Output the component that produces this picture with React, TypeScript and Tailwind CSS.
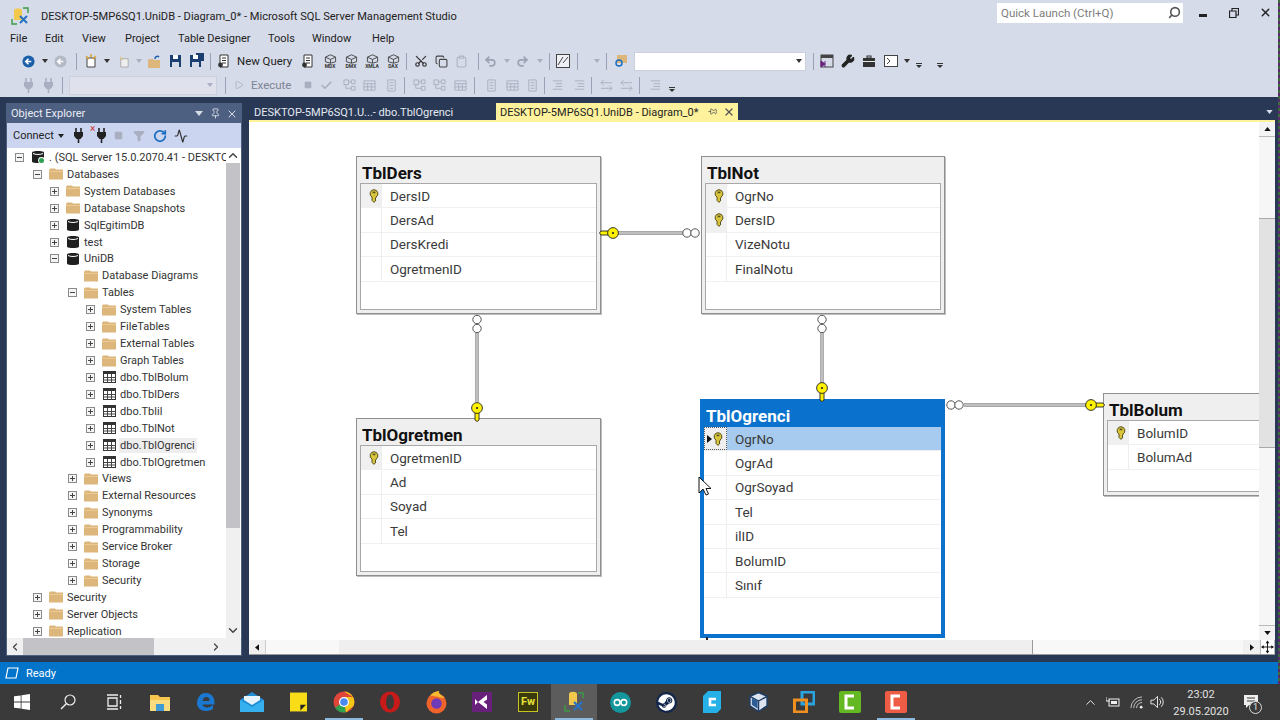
import { ReactNode } from "react";
import { Clipboard, Copy, Redo2, RotateCw, Scissors, Search, Undo2, Wrench, Activity, Filter, Square, Check, Play, ChevronUp, ChevronDown, ChevronLeft, ChevronRight, X, Pin } from "lucide-react";
import { FaSteam } from "react-icons/fa";

const font = "font-['Roboto','Noto_Sans',sans-serif]";

function KeyV({ className = "" }: { className?: string }) {
  return (
    <svg viewBox="0 0 10 14" className={`w-[10px] h-[14px] ${className}`}>
      <path d="M5 .7a4 4 0 0 1 2 7.4V9L6 10l1 1-2 2.4-2-2V8.1A4 4 0 0 1 5 .7z" fill="#d9c53c" stroke="#55501f" strokeWidth="1" />
      <rect x="3.6" y="2.6" width="2.8" height="1.6" fill="#55501f" />
    </svg>
  );
}

function Folder() {
  return (
    <svg viewBox="0 0 14 12" className="w-[14px] h-[12px]">
      <path d="M0 2V11.5H14V1.5H7L6 .5H1z" fill="#dcb67a" />
      <rect x="0" y="3" width="14" height="1" fill="#eacb96" />
    </svg>
  );
}

function DbIcon({ ok }: { ok?: boolean }) {
  return (
    <svg viewBox="0 0 14 14" className="w-[14px] h-[14px]">
      <path d="M1 2.5C1 .5 13 .5 13 2.5V11.5C13 13.5 1 13.5 1 11.5z" fill="#1f1f1f" />
      <path d="M2 3.5C4 4.8 10 4.8 12 3.5" stroke="#fff" strokeWidth="1" fill="none" />
      {ok && <circle cx="10.5" cy="10.5" r="3.4" fill="#fff" />}
      {ok && <circle cx="10.5" cy="10.5" r="2.5" fill="#2e9e50" />}
    </svg>
  );
}

function TableIcon() {
  return (
    <svg viewBox="0 0 13 12" className="w-[13px] h-[12px]">
      <rect x=".5" y=".5" width="12" height="11" fill="#fff" stroke="#333" />
      <rect x="0" y="0" width="13" height="3" fill="#333" />
      <path d="M4.5 3V12M8.5 3V12M0 6.5H13M0 9H13" stroke="#444" strokeWidth="1" />
    </svg>
  );
}

function PlugIcon({ color = "#222", className = "" }: { color?: string; className?: string }) {
  return (
    <svg viewBox="0 0 11 15" className={`w-[11px] h-[15px] shrink-0 ${className}`}>
      <path d="M3 0V4M8 0V4" stroke={color} strokeWidth="1.6" />
      <path d="M1 4H10V8L7.500 11H3.500L1 8z" fill={color} />
      <path d="M5.500 11V15" stroke={color} strokeWidth="1.6" />
    </svg>
  );
}

function Expander({ open }: { open: boolean }) {
  return (
    <span className="relative block w-[9px] h-[9px] border border-[#8a8a8a] bg-[#f5f5f5]">
      <span className="absolute left-[1px] top-[3px] w-[5px] h-[1px] bg-[#444]" />
      {!open && <span className="absolute left-[3px] top-[1px] w-[1px] h-[5px] bg-[#444]" />}
    </span>
  );
}

type TreeRow = { label: string; level: number; exp?: "open" | "closed"; icon: "server" | "folder" | "db" | "table"; sel?: boolean };

const tree: TreeRow[] = [
  { label: ". (SQL Server 15.0.2070.41 - DESKTOP-5MP6SQ1", level: 0, exp: "open", icon: "server" },
  { label: "Databases", level: 1, exp: "open", icon: "folder" },
  { label: "System Databases", level: 2, exp: "closed", icon: "folder" },
  { label: "Database Snapshots", level: 2, exp: "closed", icon: "folder" },
  { label: "SqlEgitimDB", level: 2, exp: "closed", icon: "db" },
  { label: "test", level: 2, exp: "closed", icon: "db" },
  { label: "UniDB", level: 2, exp: "open", icon: "db" },
  { label: "Database Diagrams", level: 3, icon: "folder" },
  { label: "Tables", level: 3, exp: "open", icon: "folder" },
  { label: "System Tables", level: 4, exp: "closed", icon: "folder" },
  { label: "FileTables", level: 4, exp: "closed", icon: "folder" },
  { label: "External Tables", level: 4, exp: "closed", icon: "folder" },
  { label: "Graph Tables", level: 4, exp: "closed", icon: "folder" },
  { label: "dbo.TblBolum", level: 4, exp: "closed", icon: "table" },
  { label: "dbo.TblDers", level: 4, exp: "closed", icon: "table" },
  { label: "dbo.Tblil", level: 4, exp: "closed", icon: "table" },
  { label: "dbo.TblNot", level: 4, exp: "closed", icon: "table" },
  { label: "dbo.TblOgrenci", level: 4, exp: "closed", icon: "table", sel: true },
  { label: "dbo.TblOgretmen", level: 4, exp: "closed", icon: "table" },
  { label: "Views", level: 3, exp: "closed", icon: "folder" },
  { label: "External Resources", level: 3, exp: "closed", icon: "folder" },
  { label: "Synonyms", level: 3, exp: "closed", icon: "folder" },
  { label: "Programmability", level: 3, exp: "closed", icon: "folder" },
  { label: "Service Broker", level: 3, exp: "closed", icon: "folder" },
  { label: "Storage", level: 3, exp: "closed", icon: "folder" },
  { label: "Security", level: 3, exp: "closed", icon: "folder" },
  { label: "Security", level: 1, exp: "closed", icon: "folder" },
  { label: "Server Objects", level: 1, exp: "closed", icon: "folder" },
  { label: "Replication", level: 1, exp: "closed", icon: "folder" },
];

const indent = ["pl-[8px]", "pl-[26px]", "pl-[43px]", "pl-[61px]", "pl-[79px]"];

function ObjectExplorer() {
  return (
    <div className="w-[236px] flex flex-col border border-[#4d6082] bg-[#f0f0f0] shrink-0">
      <div className="h-[19px] bg-[#4d6082] flex items-center pl-[4px] pr-[3px] text-[#e9ecf4] text-[11px] shrink-0">
        <span className="flex-1 pt-[2px]">Object Explorer</span>
        <svg viewBox="0 0 8 5" className="w-[8px] h-[5px] mr-[7px]"><path d="M0 0H8L4 5z" fill="#d7dce8" /></svg>
        <Pin className="w-[11px] h-[11px] text-[#d7dce8] mr-[5px]" />
        <X className="w-[12px] h-[12px] text-[#d7dce8]" />
      </div>
      <div className="h-[25px] bg-[#ccd5f0] flex items-center pl-[6px] text-[11px] text-[#222] shrink-0">
        <span className="w-[44px] pt-[2px]">Connect</span>
        <svg viewBox="0 0 6 4" className="w-[6px] h-[4px] ml-[1px]"><path d="M0 0H6L3 4z" fill="#222" /></svg>
        <PlugIcon className="ml-[9px]" />
        <span className="relative ml-[12px]">
          <PlugIcon />
          <span className="absolute -left-[6px] -top-[5px] text-[#c33] text-[10px] leading-[12px]">×</span>
        </span>
        <Square className="w-[9px] h-[9px] ml-[7px] text-[#a9afc0] fill-[#a9afc0]" />
        <Filter className="w-[12px] h-[12px] ml-[10px] text-[#a9afc0] fill-[#a9afc0]" />
        <RotateCw className="w-[14px] h-[14px] ml-[8px] text-[#1b6fc0]" strokeWidth={3} />
        <Activity className="w-[14px] h-[14px] ml-[7px] text-[#333]" />
      </div>
      <div className="flex h-[490px] bg-white shrink-0">
        <div className="flex-1 min-w-0 overflow-hidden pt-[1px]">
          {tree.map((r, i) => (
            <div key={i} className={`h-[16.93px] flex items-center whitespace-nowrap text-[11px] leading-[15px] text-[#333] ${indent[r.level]}`}>
              <span className="w-[9px] h-[9px] shrink-0">{r.exp && <Expander open={r.exp === "open"} />}</span>
              <span className="w-[14px] ml-[7px] shrink-0 flex justify-center">
                {r.icon === "folder" && <Folder />}
                {r.icon === "table" && <TableIcon />}
                {r.icon === "db" && <DbIcon />}
                {r.icon === "server" && <DbIcon ok />}
              </span>
              <span className={`ml-[3px] pl-[1px] pr-[2px] ${r.sel ? "bg-[#eeeeee]" : ""}`}>{r.label}</span>
            </div>
          ))}
        </div>
        <div className="w-[14px] mr-[1px] bg-[#f0f0f0] flex flex-col items-center shrink-0">
          <ChevronUp className="h-[15px] text-[#444] bg-white w-full" strokeWidth={2.5} />
          <div className="w-full h-[365px] bg-[#c3c3c7]" />
          <div className="flex-1" />
          <ChevronDown className="h-[15px] text-[#444] w-full" strokeWidth={2.5} />
        </div>
      </div>
      <div className="h-[17px] bg-[#f0f0f0] flex items-center shrink-0">
        <ChevronLeft className="w-[16px] h-[12px] text-[#444]" strokeWidth={2.5} />
        <div className="w-[131px] h-[17px] bg-[#c3c3c7]" />
        <div className="flex-1" />
        <ChevronRight className="w-[16px] h-[12px] text-[#444] mr-[17px]" strokeWidth={2.5} />
      </div>
    </div>
  );
}

function DbTable({ name, rows, keys, pos, selected, clipped }: { name: string; rows: string[]; keys: string[]; pos: string; selected?: boolean; clipped?: boolean }) {
  return (
    <div className={`absolute flex flex-col ${pos} ${selected ? "bg-[#0a72cc]" : "bg-[#efefef] border border-[#8f8f8f] shadow-[1px_1px_0_#bdbdbd]"} ${clipped ? "border-r-0" : ""}`}>
      <div className={`shrink-0 flex items-end text-[17px] font-bold ${selected ? "h-[27px] leading-[22px] text-white pl-[2px]" : "h-[26px] leading-[19px] text-[#111] pl-[5px]"}`}>{name}</div>
      <div className={`flex-1 min-h-0 bg-white ${selected ? "" : "mx-[3px] mb-[3px] border border-[#a8a8a8]"} ${clipped ? "mr-0 border-r-0" : ""}`}>
        {rows.map((r, i) => {
          const isKey = keys.includes(r);
          const active = selected && i === 0;
          return (
            <div key={r} className={`h-[24.4px] flex border-b border-[#f0f0f0] text-[13.5px] text-[#3a3a3a] ${active ? "bg-[#a6cbee]" : ""}`}>
              <div className={`shrink-0 flex items-center justify-center border-r border-[#eeeeee] ${selected ? "w-[23px]" : "w-[21px]"} ${active ? "bg-[#efefef] outline-1 outline-dotted outline-[#555] -outline-offset-1" : isKey ? "bg-[#f0f0f0] pl-[5px]" : ""}`}>
                {active && <svg viewBox="0 0 5 8" className="w-[5px] h-[8px] mr-[1px]"><path d="M0 0L5 4L0 8z" fill="#111" /></svg>}
                {isKey && <KeyV />}
              </div>
              <div className="pl-[8px] flex items-center">{r}</div>
            </div>
          );
        })}
      </div>
    </div>
  );
}

function DoubleLine({ d }: { d: string }) {
  return (
    <>
      <path d={d} stroke="#8a8a8a" strokeWidth="3.4" fill="none" />
      <path d={d} stroke="#f4f4f4" strokeWidth="1" fill="none" />
    </>
  );
}

function Inf({ x, y, horizontal }: { x: number; y: number; horizontal?: boolean }) {
  const dx = horizontal ? 4 : 0;
  const dy = horizontal ? 0 : 4.5;
  return (
    <g fill="#fff" stroke="#555" strokeWidth="1">
      <circle cx={x - dx} cy={y - dy} r="4.2" />
      <circle cx={x + dx} cy={y + dy} r="4.2" />
    </g>
  );
}

function YellowKey({ x, y, rot }: { x: number; y: number; rot: number }) {
  return (
    <g transform={`translate(${x} ${y}) rotate(${rot})`} stroke="#222" strokeWidth="0.9">
      <path d="M-2 4V12L0 13.5L2 12V4z" fill="#fff200" />
      <circle cx="0" cy="0" r="5.4" fill="#fff200" />
      <circle cx="0" cy="0" r="1.1" fill="#222" stroke="none" />
    </g>
  );
}

function Diagram() {
  return (
    <div className="relative flex-1 min-w-0 bg-white overflow-hidden">
      <DbTable name="TblDers" pos="left-[107px] top-[34px] w-[245px] h-[158px]" rows={["DersID", "DersAd", "DersKredi", "OgretmenID"]} keys={["DersID"]} />
      <DbTable name="TblNot" pos="left-[452px] top-[34px] w-[244px] h-[158px]" rows={["OgrNo", "DersID", "VizeNotu", "FinalNotu"]} keys={["OgrNo", "DersID"]} />
      <DbTable name="TblOgretmen" pos="left-[107px] top-[296px] w-[245px] h-[158px]" rows={["OgretmenID", "Ad", "Soyad", "Tel"]} keys={["OgretmenID"]} />
      <DbTable name="TblOgrenci" pos="left-[451px] top-[277px] w-[245px] h-[239px] border-[4px] border-t-[1px] border-[#0a72cc]" rows={["OgrNo", "OgrAd", "OgrSoyad", "Tel", "ilID", "BolumID", "Sınıf"]} keys={["OgrNo"]} selected />
      <DbTable name="TblBolum" pos="left-[854px] top-[271px] w-[160px] h-[103px]" rows={["BolumID", "BolumAd"]} keys={["BolumID"]} clipped />
      <svg viewBox="249 122 1010 518" className="absolute left-0 top-0 w-[1010px] h-[518px] pointer-events-none">
        <DoubleLine d="M618 233H684" />
        <Inf x={691} y={233} horizontal />
        <YellowKey x={613} y={233} rot={90} />
        <DoubleLine d="M477 332V402" />
        <Inf x={477} y={324} />
        <YellowKey x={477} y={408} rot={0} />
        <DoubleLine d="M822 332V384" />
        <Inf x={822} y={324} />
        <YellowKey x={822} y={388} rot={0} />
        <DoubleLine d="M964 405H1086" />
        <Inf x={955} y={405} horizontal />
        <YellowKey x={1091} y={405} rot={-90} />
        <path d="M699 477V493L703 489L706 495L708.5 494L706 488.5H711z" fill="#fff" stroke="#111" strokeWidth="1" />
        <rect x="706" y="637" width="2" height="3" fill="#222" />
      </svg>
    </div>
  );
}

function VScroll() {
  return (
    <div className="w-[16px] flex flex-col bg-[#f6f6f6] shrink-0">
      <div className="h-[15px] bg-[#f4f4f4] border-b border-[#bbb] flex items-center justify-center shrink-0">
        <svg viewBox="0 0 8 5" className="w-[7px] h-[4px]"><path d="M4 0L8 5H0z" fill="#111" /></svg>
      </div>
      <div className="h-[81px] shrink-0" />
      <div className="h-[230px] bg-[#e2e2e2] border-y border-[#a8a8a8] shrink-0" />
      <div className="flex-1" />
      <div className="h-[15px] bg-[#f4f4f4] border-t border-[#bbb] flex items-center justify-center shrink-0">
        <svg viewBox="0 0 8 5" className="w-[7px] h-[4px]"><path d="M0 0H8L4 5z" fill="#111" /></svg>
      </div>
    </div>
  );
}

function HScroll() {
  return (
    <div className="h-[15px] flex bg-[#f8f8f8] border-b border-[#9a9a9a] shrink-0">
      <div className="w-[17px] bg-[#f0f0f0] border-r border-[#ccc] flex items-center justify-center shrink-0">
        <svg viewBox="0 0 5 8" className="w-[4px] h-[7px]"><path d="M5 0V8L0 4z" fill="#111" /></svg>
      </div>
      <div className="w-[73px] shrink-0" />
      <div className="w-[694px] bg-[#efefef] border-r border-[#9a9a9a] shrink-0" />
      <div className="flex-1" />
      <div className="w-[17px] bg-[#f0f0f0] flex items-center justify-center shrink-0">
        <svg viewBox="0 0 5 8" className="w-[4px] h-[7px]"><path d="M0 0V8L5 4z" fill="#111" /></svg>
      </div>
      <div className="w-[15px] bg-white border-x border-[#bbb] flex items-center justify-center shrink-0">
        <svg viewBox="0 0 14 14" className="w-[14px] h-[14px]">
          <path d="M7 1V13M1 7H13" stroke="#111" strokeWidth="1" />
          <path d="M7 0L9 3H5zM7 14L9 11H5zM0 7L3 5V9zM14 7L11 5V9z" fill="#111" />
        </svg>
      </div>
    </div>
  );
}

function Grip() {
  return <span className="block w-[5px] h-[18px] shrink-0 bg-[radial-gradient(#9ca2b5_40%,transparent_45%)] bg-[length:2px_2px]" />;
}

function Sep({ ml = "" }: { ml?: string }) {
  return <span className={`block w-[1px] h-[17px] bg-[#9aa0b5] shrink-0 ${ml}`} />;
}

function Caret({ ml = "", light }: { ml?: string; light?: boolean }) {
  return (
    <svg viewBox="0 0 6 4" className={`w-[6px] h-[4px] shrink-0 ${ml}`}>
      <path d="M0 0H6L3 4z" fill={light ? "#a9afc0" : "#333"} />
    </svg>
  );
}

function CircleBtn({ ml, on }: { ml: string; on?: boolean }) {
  return (
    <svg viewBox="0 0 14 14" className={`w-[13px] h-[13px] shrink-0 ${ml}`}>
      <circle cx="7" cy="7" r="6.5" fill={on ? "#1b5fa8" : "#b4b9c6"} />
      <path d="M10 7H5M7 4L4 7L7 10" stroke="#fff" strokeWidth="1.7" fill="none" />
    </svg>
  );
}

function DocIcon({ ml, stroke = "#333" }: { ml: string; stroke?: string }) {
  return (
    <svg viewBox="0 0 14 14" className={`w-[14px] h-[14px] shrink-0 ${ml}`}>
      <path d="M3 1H11V13H3z" fill="#fff" stroke={stroke} />
      <path d="M5 4H9M5 6.5H9M5 9H9" stroke={stroke} />
      <circle cx="3.5" cy="11" r="2.4" fill={stroke} />
    </svg>
  );
}

function CubeQuery({ ml, label }: { ml: string; label: string }) {
  return (
    <span className={`relative flex flex-col items-center w-[16px] shrink-0 ${ml}`}>
      <svg viewBox="0 0 14 10" className="w-[13px] h-[10px]">
        <path d="M7 .5L12.5 3V8L7 9.5L1.5 8V3zM1.5 3L7 5.5L12.5 3M7 5.5V9.5" fill="none" stroke="#444" />
      </svg>
      <span className="text-[5px] leading-[5px] font-bold text-[#333]">{label}</span>
    </span>
  );
}

function SaveIcon({ ml, double }: { ml: string; double?: boolean }) {
  return (
    <span className={`relative block w-[13px] h-[12px] shrink-0 ${ml}`}>
      {double && <span className="absolute left-[6px] -top-[2px] w-[8px] h-[8px] bg-[#1c3f72]" />}
      <span className="absolute left-0 top-0 w-[11px] h-[12px] bg-[#1c3f72]" />
      <span className="absolute left-[3px] top-0 w-[5px] h-[4px] bg-white" />
      <span className="absolute left-[2px] top-[7px] w-[7px] h-[5px] bg-[#d6dbe9]" />
    </span>
  );
}

function Toolbar1() {
  return (
    <div className="h-[24px] flex items-center text-[11.4px] text-[#222] pl-[9px] shrink-0">
      <Grip />
      <CircleBtn ml="ml-[8px]" on />
      <Caret ml="ml-[7px]" />
      <CircleBtn ml="ml-[6px]" />
      <Sep ml="ml-[9px]" />
      <svg viewBox="0 0 14 14" className="w-[14px] h-[14px] ml-[7px] shrink-0">
        <path d="M3 4H11V13H3z" fill="#fff" stroke="#444" />
        <path d="M2 2L5 5M7 0V3M12 2L9 5" stroke="#d9a32e" strokeWidth="1.5" />
      </svg>
      <Caret ml="ml-[6px]" />
      <svg viewBox="0 0 14 14" className="w-[13px] h-[13px] ml-[8px] shrink-0">
        <path d="M3 4H11V13H3z" fill="#eee" stroke="#aaa" />
        <path d="M2 2L5 5" stroke="#dcc58e" strokeWidth="1.5" />
      </svg>
      <Caret ml="ml-[5px]" light />
      <svg viewBox="0 0 14 13" className="w-[14px] h-[13px] ml-[6px] shrink-0">
        <path d="M0 5V13H12V5H6L5 4H1z" fill="#dcb67a" />
        <path d="M7 4C7 1 10 1 11 2" stroke="#1b5fa8" strokeWidth="1.5" fill="none" />
      </svg>
      <SaveIcon ml="ml-[8px]" />
      <SaveIcon ml="ml-[7px]" double />
      <Sep ml="ml-[7px]" />
      <DocIcon ml="ml-[6px]" />
      <span className="ml-[6px] w-[56px] pt-[2px] whitespace-nowrap shrink-0">New Query</span>
      <DocIcon ml="ml-[8px]" />
      <CubeQuery ml="ml-[7px]" label="MDX" />
      <CubeQuery ml="ml-[5px]" label="DMX" />
      <CubeQuery ml="ml-[5px]" label="XMLA" />
      <CubeQuery ml="ml-[5px]" label="DAX" />
      <Sep ml="ml-[5px]" />
      <Scissors className="w-[14px] h-[14px] ml-[7px] shrink-0 text-[#333] -rotate-90" />
      <Copy className="w-[13px] h-[13px] ml-[7px] shrink-0 text-[#444]" />
      <Clipboard className="w-[13px] h-[13px] ml-[7px] shrink-0 text-[#aeb3c2]" />
      <Sep ml="ml-[10px]" />
      <Undo2 className="w-[13px] h-[13px] ml-[5px] shrink-0 text-[#9ba1b2]" strokeWidth={3} />
      <Caret ml="ml-[7px]" light />
      <Redo2 className="w-[13px] h-[13px] ml-[6px] shrink-0 text-[#9ba1b2]" strokeWidth={3} />
      <Caret ml="ml-[8px]" light />
      <Sep ml="ml-[6px]" />
      <svg viewBox="0 0 14 14" className="w-[14px] h-[14px] ml-[6px] shrink-0">
        <rect x=".5" y=".5" width="13" height="13" fill="#eef0f6" stroke="#444" />
        <path d="M2 11L7 3M7 9L12 3" stroke="#444" />
      </svg>
      <Sep ml="ml-[7px]" />
      <Caret ml="ml-[16px]" light />
      <Sep ml="ml-[6px]" />
      <svg viewBox="0 0 14 14" className="w-[14px] h-[14px] ml-[7px] shrink-0">
        <rect x="3" y="1" width="10" height="8" fill="#dcb67a" />
        <circle cx="5" cy="9" r="3" fill="none" stroke="#1b6fc0" strokeWidth="1.5" />
      </svg>
      <div className="w-[172px] h-[19px] ml-[6px] bg-white border border-[#ccd0dc] flex items-center justify-end pr-[3px] shrink-0">
        <Caret />
      </div>
      <Sep ml="ml-[7px]" />
      <svg viewBox="0 0 14 14" className="w-[14px] h-[14px] ml-[6px] shrink-0">
        <rect x="1" y="1" width="12" height="12" fill="none" stroke="#444" />
        <rect x="1" y="1" width="12" height="3" fill="#444" />
        <path d="M1 7L5 10L1 13zM5 7V13" fill="#68217a" stroke="#68217a" />
      </svg>
      <Wrench className="w-[14px] h-[14px] ml-[7px] shrink-0 text-[#222] fill-[#222]" />
      <svg viewBox="0 0 14 12" className="w-[14px] h-[12px] ml-[7px] shrink-0">
        <rect x="1" y="3" width="12" height="9" fill="#333" />
        <rect x="5" y="1" width="4" height="2" fill="none" stroke="#333" />
        <rect x="1" y="6" width="12" height="1" fill="#eee" />
      </svg>
      <svg viewBox="0 0 14 12" className="w-[14px] h-[12px] ml-[8px] shrink-0">
        <rect x=".5" y=".5" width="13" height="11" fill="#fff" stroke="#444" />
        <path d="M3 3L6 6L3 9" stroke="#444" fill="none" />
      </svg>
      <Caret ml="ml-[6px]" />
      <Overflow ml="ml-[6px]" />
      <span className="ml-[4px] block"><Grip /></span>
      <Overflow ml="ml-[6px]" />
    </div>
  );
}

function Overflow({ ml = "" }: { ml?: string }) {
  return (
    <span className={`flex flex-col gap-[1px] mt-[8px] shrink-0 ${ml}`}>
      <span className="block w-[6px] h-[1px] bg-[#333]" />
      <svg viewBox="0 0 6 3" className="w-[6px] h-[3px]"><path d="M0 0H6L3 3z" fill="#333" /></svg>
    </span>
  );
}

function GhostBox({ ml, kind = "doc" }: { ml: string; kind?: "doc" | "tree" | "grid" | "lines" | "arrows" }) {
  return (
    <svg viewBox="0 0 14 14" className={`w-[13px] h-[13px] shrink-0 ${ml}`}>
      {kind === "doc" && <path d="M3 1H11V13H3zM5 4H9M5 7H9M5 10H9" fill="none" stroke="#a9afc0" />}
      {kind === "tree" && <path d="M1 1H6V6H1zM9 1H13V5H9zM3 6V10H9M9 8H13V12H9zM6 3H9" fill="none" stroke="#a9afc0" />}
      {kind === "grid" && <path d="M1 2H13V12H1zM1 5H13M1 8.500H13M5 5V12M9 5V12" fill="none" stroke="#a9afc0" />}
      {kind === "lines" && <path d="M2 2H12M5 5H12M5 8H12M2 11H12" fill="none" stroke="#a9afc0" />}
      {kind === "arrows" && <path d="M1 4H13M1 10H13M4 1L1 4L4 7M10 7L13 10L10 13" fill="none" stroke="#a9afc0" />}
    </svg>
  );
}

function Toolbar2() {
  return (
    <div className="h-[24px] flex items-center text-[11.5px] text-[#7d8496] pl-[9px] shrink-0">
      <Grip />
      <PlugIcon color="#a9afc0" className="ml-[9px]" />
      <PlugIcon color="#a9afc0" className="ml-[9px]" />
      <Sep ml="ml-[8px]" />
      <div className="w-[148px] h-[19px] ml-[6px] bg-[#dfe2ec] border border-[#ccd0dc] flex items-center justify-end pr-[3px] shrink-0">
        <Caret light />
      </div>
      <Sep ml="ml-[8px]" />
      <Play className="w-[10px] h-[10px] ml-[8px] shrink-0 text-[#a9afc0]" />
      <span className="ml-[7px] w-[40px] pt-[2px] whitespace-nowrap shrink-0">Execute</span>
      <Square className="w-[8px] h-[8px] ml-[13px] shrink-0 text-[#a9afc0] fill-[#a9afc0]" />
      <Check className="w-[13px] h-[13px] ml-[8px] shrink-0 text-[#a9afc0]" strokeWidth={3} />
      <GhostBox ml="ml-[10px]" kind="tree" />
      <GhostBox ml="ml-[7px]" kind="grid" />
      <GhostBox ml="ml-[9px]" />
      <Sep ml="ml-[6px]" />
      <GhostBox ml="ml-[8px]" kind="tree" />
      <GhostBox ml="ml-[7px]" kind="tree" />
      <GhostBox ml="ml-[8px]" kind="grid" />
      <Sep ml="ml-[7px]" />
      <GhostBox ml="ml-[10px]" />
      <GhostBox ml="ml-[8px]" kind="grid" />
      <GhostBox ml="ml-[7px]" />
      <Sep ml="ml-[5px]" />
      <GhostBox ml="ml-[6px]" kind="lines" />
      <GhostBox ml="ml-[9px]" kind="lines" />
      <Sep ml="ml-[5px]" />
      <GhostBox ml="ml-[8px]" kind="arrows" />
      <GhostBox ml="ml-[7px]" kind="arrows" />
      <Sep ml="ml-[6px]" />
      <GhostBox ml="ml-[9px]" kind="lines" />
      <Overflow ml="ml-[7px]" />
    </div>
  );
}

function Chrome() {
  return (
    <div className="h-[97px] bg-[#d6dbe9] shrink-0 flex flex-col">
      <div className="h-[30px] flex items-center pl-[11px] pt-[1px] shrink-0">
        <svg viewBox="0 0 18 18" className="w-[18px] h-[18px] shrink-0">
          <path d="M3 3C3 1 11 1 11 3V13H3z" fill="#f2c94c" />
          <path d="M1 12V17H6M12 1H17V6" stroke="#3c9a46" strokeWidth="1.4" fill="none" />
          <path d="M9 9L16 16M16 9L9 16" stroke="#2673c4" strokeWidth="2" />
        </svg>
        <span className="ml-[12px] pt-[4px] text-[11.1px] whitespace-nowrap text-[#222]">DESKTOP-5MP6SQ1.UniDB - Diagram_0* - Microsoft SQL Server Management Studio</span>
        <div className="ml-auto flex items-center -mt-[6px]">
          <div className="w-[186px] h-[20px] bg-white flex items-center justify-between pl-[4px] pr-[2px] text-[11.5px] text-[#7c7c7c]">
            <span className="pt-[2px]">Quick Launch (Ctrl+Q)</span>
            <Search className="w-[13px] h-[13px] text-[#555] -scale-x-100" strokeWidth={3} />
          </div>
          <span className="block w-[8px] h-[3px] bg-[#222] ml-[16px] mt-[6px]" />
          <svg viewBox="0 0 10 10" className="w-[10px] h-[10px] ml-[22px]">
            <path d="M.5 3H7V9.5H.5zM3 3V.5H9.5V7H7" fill="none" stroke="#222" strokeWidth="1.2" />
          </svg>
          <X className="w-[13px] h-[13px] text-[#222] ml-[20px] mr-[8px]" strokeWidth={2.5} />
        </div>
      </div>
      <div className="h-[17px] flex items-center text-[11px] text-[#222] pl-[10px] pt-[2px] shrink-0">
        <span className="w-[35px]">File</span>
        <span className="w-[37px]">Edit</span>
        <span className="w-[43px]">View</span>
        <span className="w-[53px]">Project</span>
        <span className="w-[90px] whitespace-nowrap">Table Designer</span>
        <span className="w-[44px]">Tools</span>
        <span className="w-[60px]">Window</span>
        <span>Help</span>
      </div>
      <div className="h-[2px] shrink-0" />
      <Toolbar1 />
      <Toolbar2 />
    </div>
  );
}

function TabStrip() {
  return (
    <div className="h-[17px] flex items-center text-[11px] shrink-0">
      <div className="w-[247px] pl-[5px] pt-[3px] text-[#e4e8f1] whitespace-nowrap">DESKTOP-5MP6SQ1.U...- dbo.TblOgrenci</div>
      <div className="w-[242px] h-[17px] bg-[#fff29d] flex items-center pl-[4px] text-[#222] whitespace-nowrap">
        <span className="pt-[3px]">DESKTOP-5MP6SQ1.UniDB - Diagram_0*</span>
        <Pin className="w-[9px] h-[9px] ml-auto text-[#555] rotate-90" />
        <X className="w-[12px] h-[12px] ml-[6px] mr-[3px] text-[#555]" strokeWidth={2.5} />
      </div>
      <svg viewBox="0 0 8 5" className="w-[7px] h-[4px] ml-auto mr-[2px]"><path d="M0 0H8L4 5z" fill="#d7dce8" /></svg>
    </div>
  );
}

function Document() {
  return (
    <div className="w-[1026px] flex flex-col shrink-0">
      <TabStrip />
      <div className="h-[2px] bg-[#fff29d] shrink-0" />
      <div className="h-[533px] flex flex-col shrink-0">
        <div className="flex-1 min-h-0 flex">
          <Diagram />
          <VScroll />
        </div>
        <HScroll />
      </div>
    </div>
  );
}

function TaskCell({ children, active, running }: { children?: ReactNode; active?: boolean; running?: boolean }) {
  return (
    <div className={`relative w-[46px] h-[36px] flex items-center justify-center shrink-0 ${active ? "bg-[#5c5c5c]" : ""}`}>
      {children}
      {running && <span className="absolute left-[4px] right-[4px] bottom-0 h-[2px] bg-[#8fb8dd]" />}
    </div>
  );
}

function Taskbar() {
  return (
    <div className="h-[36px] bg-[#3a3a3a] flex items-center shrink-0 text-[#e2e2e2]">
      <div className="flex -ml-[1px]">
        <TaskCell>
          <svg viewBox="0 0 16 16" className="w-[16px] h-[16px]"><path d="M0 2.3L6.7 1.4V7.6H0zM7.5 1.3L16 0V7.6H7.5zM0 8.4H6.7V14.6L0 13.7zM7.5 8.4H16V16L7.5 14.7z" fill="#fff" /></svg>
        </TaskCell>
        <TaskCell>
          <svg viewBox="0 0 16 16" className="w-[16px] h-[16px]"><circle cx="10" cy="6" r="5" fill="none" stroke="#eee" strokeWidth="1.2" /><path d="M6.5 9.5L1 15" stroke="#eee" strokeWidth="1.4" /></svg>
        </TaskCell>
        <TaskCell>
          <svg viewBox="0 0 16 16" className="w-[16px] h-[16px]"><path d="M2 4H11V12H2zM1 1H12M1 15H12" fill="none" stroke="#eee" strokeWidth="1.3" /><path d="M14.5 1V4M14.5 6V10M14.5 12V15" stroke="#eee" strokeWidth="1.3" /></svg>
        </TaskCell>
        <TaskCell>
          <svg viewBox="0 0 20 20" className="w-[20px] h-[20px]"><path d="M0 3H8L10 5H20V19H0z" fill="#f6c64f" /><rect x="0" y="8" width="20" height="11" fill="#fadb7e" /><rect x="6" y="12" width="8" height="7" fill="#3f9bd6" /></svg>
        </TaskCell>
        <TaskCell>
          <svg viewBox="0 0 20 20" className="w-[20px] h-[20px]"><path d="M10 1C4 1 1 6 1 11C1 16 5 19 10 19C13 19 15 18 17 17V13C15 14.500 13 15.500 11 15.500C8.500 15.500 6.500 14 6.500 12.500H18.500V10C18.500 5 15 1 10 1zM6.500 9C7 6.500 8.500 5 10.500 5C12.500 5 13.500 6.500 13.500 9z" fill="#1a78d0" /></svg>
        </TaskCell>
        <TaskCell>
          <svg viewBox="0 0 24 20" className="w-[24px] h-[20px]"><path d="M12 0L24 8V20H0V8z" fill="#1f8ed6" /><path d="M0 8L12 15L24 8V20H0z" fill="#36b0ee" /><path d="M4 4H20V8L12 13L4 8z" fill="#e8f4fb" /></svg>
        </TaskCell>
        <TaskCell>
          <svg viewBox="0 0 18 20" className="w-[17px] h-[20px]"><rect width="18" height="20" fill="#f7dc17" /><path d="M11 19L17 13H11z" fill="#222" /></svg>
        </TaskCell>
        <TaskCell running>
          <svg viewBox="0 0 22 22" className="w-[22px] h-[22px]">
            <circle cx="11" cy="11" r="10.500" fill="#e0453a" />
            <path d="M11 11L2 16.500A10.500 10.500 0 0 0 13 21.300z" fill="#2fa24f" />
            <path d="M11 .5A10.500 10.500 0 0 1 20.500 15L13 21.300 11 11V6H20z" fill="#f5c518" />
            <circle cx="11" cy="11" r="5" fill="#fff" />
            <circle cx="11" cy="11" r="3.800" fill="#4a8af0" />
          </svg>
        </TaskCell>
        <TaskCell>
          <svg viewBox="0 0 20 22" className="w-[20px] h-[22px]"><ellipse cx="10" cy="11" rx="10" ry="10.500" fill="#c91a1a" /><ellipse cx="10" cy="11" rx="4" ry="7.500" fill="#3a3a3a" /></svg>
        </TaskCell>
        <TaskCell>
          <svg viewBox="0 0 22 24" className="w-[21px] h-[23px]">
            <circle cx="11" cy="13" r="10.500" fill="#f0642c" />
            <path d="M4 5C7 1 12 0 14 0C12 3 17 4 19 7C20 9 12 5 4 5z" fill="#f7b731" />
            <circle cx="11" cy="13" r="5.500" fill="#6e3ab8" />
          </svg>
        </TaskCell>
        <TaskCell>
          <svg viewBox="0 0 20 20" className="w-[20px] h-[20px]">
            <rect width="20" height="20" fill="#68217a" />
            <path d="M3 7L6 10L3 13zM15 3L6 10L15 17zM15 7.500V12.500L11.500 10z" fill="#fff" fillRule="evenodd" />
          </svg>
        </TaskCell>
        <TaskCell>
          <div className="w-[20px] h-[20px] bg-[#3b3a0c] border border-[#c8c520] text-[#e7e43a] text-[11px] leading-[18px] font-bold text-center">Fw</div>
        </TaskCell>
        <TaskCell active running>
          <svg viewBox="0 0 20 22" className="w-[20px] h-[22px]">
            <path d="M5 3C5 0 13 0 13 3V14H5z" fill="#f2c94c" />
            <path d="M1 14V20H6M14 2H19V7" stroke="#3c9a46" strokeWidth="1.5" fill="none" />
            <path d="M10 11L18 19M18 11L10 19" stroke="#2673c4" strokeWidth="2.2" />
          </svg>
        </TaskCell>
        <TaskCell>
          <svg viewBox="0 0 22 22" className="w-[21px] h-[21px]"><circle cx="11" cy="11" r="11" fill="#13979c" /><circle cx="7.500" cy="11" r="3" fill="none" stroke="#fff" strokeWidth="1.600" /><circle cx="14.500" cy="11" r="3" fill="none" stroke="#fff" strokeWidth="1.600" /></svg>
        </TaskCell>
        <TaskCell>
          <span className="w-[21px] h-[21px] rounded-full bg-[#11264a] flex items-center justify-center"><FaSteam className="w-[17px] h-[17px] text-white" /></span>
        </TaskCell>
        <TaskCell>
          <svg viewBox="0 0 18 22" className="w-[18px] h-[22px]"><path d="M5 0H18V18L14 22H0V5z" fill="#25b1e8" /><path d="M13 8H7V14H13" stroke="#fff" strokeWidth="2.600" fill="none" /></svg>
        </TaskCell>
        <TaskCell>
          <svg viewBox="0 0 20 22" className="w-[19px] h-[22px]"><path d="M10 1L19 5V15L10 21L1 15V5z" fill="#dde4f0" stroke="#1d3b63" strokeWidth="1.500" /><path d="M1 5L10 10L19 5M10 10V21" stroke="#1d3b63" strokeWidth="1.500" fill="none" /><path d="M3 7L9 10V18L3 14z" fill="#2b5d94" /></svg>
        </TaskCell>
        <TaskCell>
          <svg viewBox="0 0 22 22" className="w-[22px] h-[22px]"><rect x="9" y="1" width="12" height="12" fill="none" stroke="#2aa3de" strokeWidth="3" /><rect x="1.500" y="9" width="12" height="12" fill="none" stroke="#ef8f1f" strokeWidth="3" /></svg>
        </TaskCell>
        <TaskCell>
          <svg viewBox="0 0 22 22" className="w-[22px] h-[22px]"><rect width="22" height="22" rx="2" fill="#64b821" /><path d="M15 5H7V17H15" stroke="#fff" strokeWidth="3" fill="none" /></svg>
        </TaskCell>
        <TaskCell running>
          <svg viewBox="0 0 22 22" className="w-[22px] h-[22px]"><rect width="22" height="22" rx="2" fill="#ee5c46" /><path d="M15 5H7V17H15" stroke="#fff" strokeWidth="3" fill="none" /></svg>
        </TaskCell>
      </div>
      <div className="ml-auto flex items-center">
        <ChevronUp className="w-[15px] h-[15px] text-[#eee]" strokeWidth={1.5} />
        <svg viewBox="0 0 14 10" className="w-[14px] h-[10px] ml-[8px]"><rect x="3" y="2" width="10" height="7" fill="none" stroke="#eee" /><rect x="5" y="4" width="6" height="3" fill="#eee" /><path d="M0 0V4H4" stroke="#eee" fill="none" /></svg>
        <svg viewBox="0 0 14 14" className="w-[13px] h-[13px] ml-[10px]"><path d="M1 13A12 12 0 0 1 13 1M4 13A9 9 0 0 1 13 4M7 13A6 6 0 0 1 13 7" stroke="#c9c9c9" fill="none" /><circle cx="12" cy="12" r="1.500" fill="#eee" /></svg>
        <svg viewBox="0 0 16 14" className="w-[15px] h-[14px] ml-[7px]"><path d="M1 5H4L8 1V13L4 9H1z" fill="none" stroke="#eee" /><path d="M10 4A4 4 0 0 1 10 10M12 2A7 7 0 0 1 12 12" stroke="#eee" fill="none" /></svg>
        <div className="w-[56px] ml-[8px] flex flex-col items-center text-[11px] leading-[17px] pt-[1px]">
          <span>23:02</span>
          <span className="whitespace-nowrap text-[11px]">29.05.2020</span>
        </div>
        <span className="relative block ml-[14px] mr-[21px] w-[16px] h-[16px]">
          <svg viewBox="0 0 16 16" className="w-[16px] h-[16px]"><path d="M1 1H15V11H6L3 14V11H1z" fill="#eee" /><path d="M4 4H12M4 7H12" stroke="#3a3a3a" /></svg>
          <span className="absolute -right-[3px] -bottom-[4px] w-[13px] h-[13px] rounded-full bg-[#3a3a3a] border border-[#ddd] text-[9px] leading-[11px] text-center">1</span>
        </span>
      </div>
    </div>
  );
}

export default function App() {
  return (
    <div className={`relative w-[1280px] h-[720px] overflow-hidden flex flex-col bg-[#293955] ${font}`}>
      <Chrome />
      <div className="h-[565px] flex gap-[7px] pl-[6px] pt-[6px] shrink-0 items-start">
        <ObjectExplorer />
        <Document />
      </div>
      <div className="h-[22px] bg-[#0274c9] flex items-center pl-[5px] text-[11px] text-white shrink-0">
        <svg viewBox="0 0 14 12" className="w-[14px] h-[12px]"><path d="M3 1H13L11 11H1z" fill="none" stroke="#fff" strokeWidth="1.200" /></svg>
        <span className="ml-[7px] pt-[2px]">Ready</span>
      </div>
      <Taskbar />
      <div className="absolute right-0 top-0 w-[2px] h-[684px] bg-[repeating-linear-gradient(180deg,#3d6b3a_0,#3d6b3a_3px,#5b2a6e_3px,#5b2a6e_6px)]" />
    </div>
  );
}
